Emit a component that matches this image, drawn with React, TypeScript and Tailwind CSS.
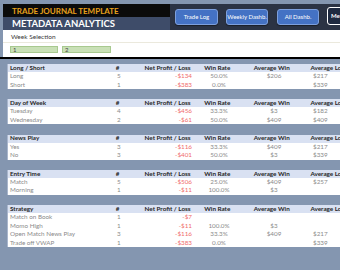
const FONT = "font-['Lato','Liberation_Sans',sans-serif]";

interface Row {
  label: string;
  count: number;
  net: string;
  winRate: string;
  avgWin: string;
  avgLoss: string;
}

interface Section {
  title: string;
  rows: Row[];
}

const sections: Section[] = [
  {
    title: 'Long / Short',
    rows: [
      { label: 'Long', count: 5, net: '-$134', winRate: '50.0%', avgWin: '$206', avgLoss: '$217' },
      { label: 'Short', count: 1, net: '-$383', winRate: '0.0%', avgWin: '', avgLoss: '$339' },
    ],
  },
  {
    title: 'Day of Week',
    rows: [
      { label: 'Tuesday', count: 4, net: '-$456', winRate: '33.3%', avgWin: '$3', avgLoss: '$182' },
      { label: 'Wednesday', count: 2, net: '-$61', winRate: '50.0%', avgWin: '$409', avgLoss: '$409' },
    ],
  },
  {
    title: 'News Play',
    rows: [
      { label: 'Yes', count: 3, net: '-$116', winRate: '33.3%', avgWin: '$409', avgLoss: '$217' },
      { label: 'No', count: 3, net: '-$401', winRate: '50.0%', avgWin: '$3', avgLoss: '$339' },
    ],
  },
  {
    title: 'Entry Time',
    rows: [
      { label: 'Match', count: 5, net: '-$506', winRate: '25.0%', avgWin: '$409', avgLoss: '$257' },
      { label: 'Morning', count: 1, net: '-$11', winRate: '100.0%', avgWin: '$3', avgLoss: '' },
    ],
  },
  {
    title: 'Strategy',
    rows: [
      { label: 'Match on Book', count: 1, net: '-$7', winRate: '', avgWin: '', avgLoss: '' },
      { label: 'Momo High', count: 1, net: '-$11', winRate: '100.0%', avgWin: '$3', avgLoss: '' },
      { label: 'Open Match News Play', count: 3, net: '-$116', winRate: '33.3%', avgWin: '$409', avgLoss: '$217' },
      { label: 'Trade off VWAP', count: 1, net: '-$383', winRate: '0.0%', avgWin: '', avgLoss: '$339' },
    ],
  },
];

function NavButton({ label, width }: { label: string; width: string }) {
  return (
    <div
      className={`${width} h-[16px] mt-[5px] rounded-[3px] bg-[#4472c4] border border-[#7d9fdc] shadow-[0_1px_1px_rgba(0,0,0,0.4)] flex items-center justify-center text-white text-[6px] leading-none whitespace-nowrap`}
    >
      {label}
    </div>
  );
}

function StatTable({ section }: { section: Section }) {
  return (
    <div className="w-[340px] bg-white border-l border-[#a9b6cc]">
      <div className="flex items-center h-[8px] bg-[#d9e1f2] text-[6.3px] leading-none font-bold text-[#262626] whitespace-nowrap">
        <div className="w-[109px] pl-[2px]">{section.title}</div>
        <div className="w-[30px]">#</div>
        <div className="w-[45px] flex justify-end">Net Profit / Loss</div>
        <div className="w-[54px] text-center">Win Rate</div>
        <div className="w-[56px] text-center">Average Win</div>
        <div className="pl-[11px]">Average Loss</div>
      </div>
      {section.rows.map((r) => (
        <div key={r.label} className="flex items-center h-[8.5px] text-[6.3px] leading-none text-[#8a8a8a] whitespace-nowrap">
          <div className="w-[109px] pl-[2px]">{r.label}</div>
          <div className="w-[30px]">{r.count}</div>
          <div className="w-[45px] text-right text-[#f06b6b]">{r.net}</div>
          <div className="w-[54px] text-center">{r.winRate}</div>
          <div className="w-[56px] text-center">{r.avgWin}</div>
          <div className="pl-[11px]">{r.avgLoss}</div>
        </div>
      ))}
    </div>
  );
}

export default function App() {
  return (
    <div className={`w-[340px] h-[270px] overflow-hidden bg-[#8496b0] ${FONT}`}>
      {/* Title + nav */}
      <div className="flex pt-[4px] pl-[3px] h-[30px]">
        <div className="w-[167px] flex flex-col">
          <div className="h-[13px] bg-[#0b0b0b] pl-[9px] flex items-center text-[8px] font-bold text-[#e8a21c] leading-none">
            TRADE JOURNAL TEMPLATE
          </div>
          <div className="h-[13px] bg-[#3e4c69] pl-[9px] flex items-center text-[9.5px] font-bold text-white leading-none">
            METADATA ANALYTICS
          </div>
        </div>
        <div className="flex-1 bg-[#2b3344] flex items-start pl-[5px] gap-[8px] overflow-hidden">
          <NavButton label="Trade Log" width="w-[43px] shrink-0" />
          <NavButton label="Weekly Dashb." width="w-[42px] shrink-0" />
          <NavButton label="All Dashb." width="w-[42px] shrink-0 ml-[1px]" />
          <div className="w-[40px] shrink-0 h-[18px] mt-[3px] rounded-[3px] border-[1.5px] border-white bg-[#1f2a40] flex items-center pl-[3px] text-white text-[6px] font-bold leading-none whitespace-nowrap">
            Metadata
          </div>
        </div>
      </div>

      {/* Week selection */}
      <div className="ml-[3px] h-[27px] bg-white flex flex-col">
        <div className="h-[13px] pl-[8px] flex items-end pb-[2px] text-[6.5px] text-[#3a3a3a] leading-none border-b border-[#ebe9dd]">
          Week Selection
        </div>
        <div className="flex gap-[4px] pl-[7px] mt-[3px]">
          <div className="w-[48px] h-[7px] bg-[#c9e0b6] border border-[#a8c98f] pl-[2px] flex items-center text-[6px] text-[#444] leading-none">1</div>
          <div className="w-[49px] h-[7px] bg-[#c9e0b6] border border-[#a8c98f] pl-[2px] flex items-center text-[6px] text-[#444] leading-none">2</div>
        </div>
      </div>
      <div className="h-[2px] bg-black" />

      {/* Tables */}
      <div className="pl-[7px] pt-[5px] flex flex-col gap-[10.25px]">
        {sections.map((s) => (
          <StatTable key={s.title} section={s} />
        ))}
      </div>
    </div>
  );
}
